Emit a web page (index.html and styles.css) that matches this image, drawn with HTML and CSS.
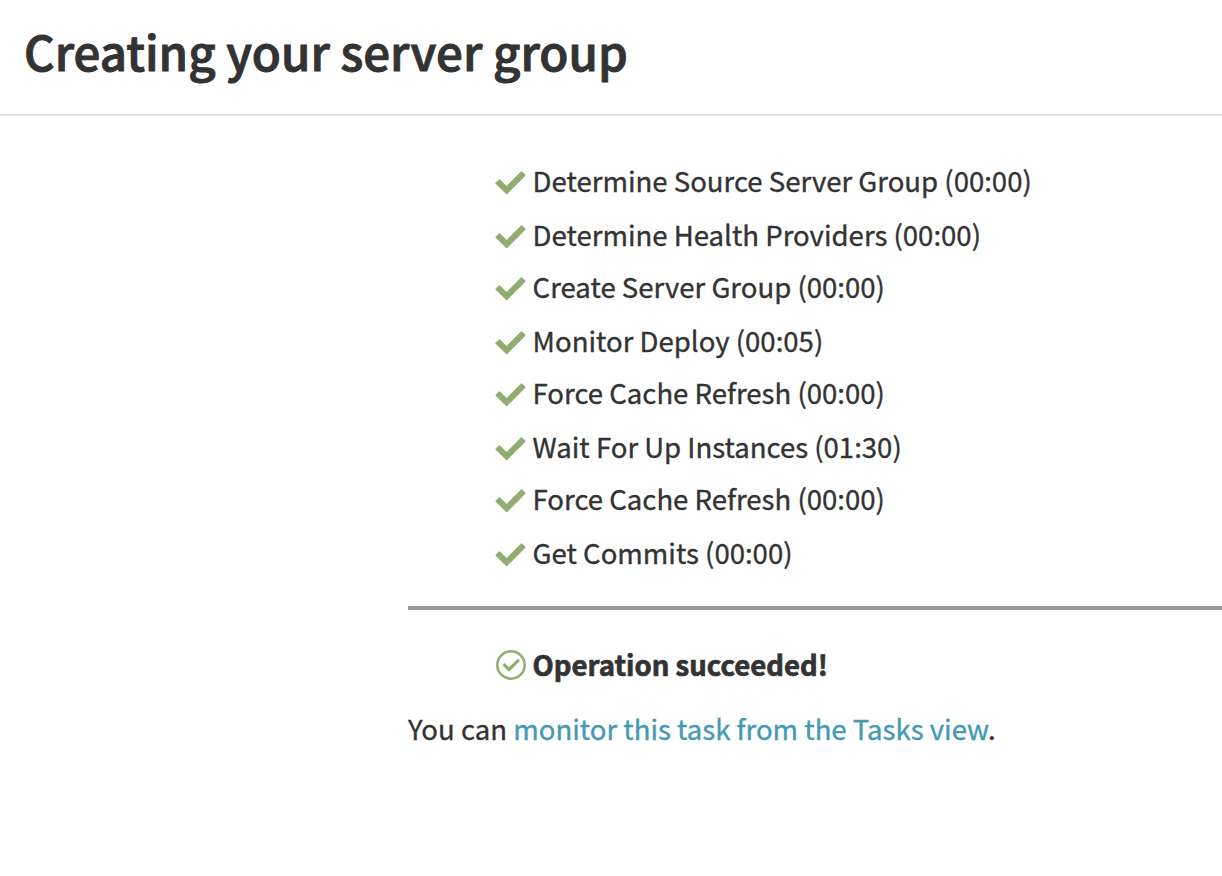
FILE: index.html
```html
<!DOCTYPE html>
<html lang="en">
<head>
<meta charset="utf-8">
<title>Creating your server group</title>
<link rel="stylesheet" href="styles.css">
</head>
<body>
<svg class="defs" aria-hidden="true">
  <symbol id="check" viewBox="0 0 31 24"><path d="M1.2 12.2 4.4 9 11.7 16 26.6 1.1 29.8 4.3 11.7 22.4Z"/></symbol>
</svg>
<header class="header"><h1 class="title">Creating your server group</h1></header>
<main class="content">
  <ul class="steps">
    <li class="step"><svg class="check"><use href="#check"/></svg><span>Determine Source Server Group (00:00)</span></li>
    <li class="step"><svg class="check"><use href="#check"/></svg><span>Determine Health Providers (00:00)</span></li>
    <li class="step"><svg class="check"><use href="#check"/></svg><span>Create Server Group (00:00)</span></li>
    <li class="step"><svg class="check"><use href="#check"/></svg><span>Monitor Deploy (00:05)</span></li>
    <li class="step"><svg class="check"><use href="#check"/></svg><span>Force Cache Refresh (00:00)</span></li>
    <li class="step"><svg class="check"><use href="#check"/></svg><span>Wait For Up Instances (01:30)</span></li>
    <li class="step"><svg class="check"><use href="#check"/></svg><span>Force Cache Refresh (00:00)</span></li>
    <li class="step"><svg class="check"><use href="#check"/></svg><span>Get Commits (00:00)</span></li>
  </ul>
  <p class="result"><svg class="circle" viewBox="0 0 30 30"><circle cx="15" cy="15" r="13.7"/><path d="M7.5 14.2 13 19.6 22.8 9.8"/></svg><span>Operation succeeded!</span></p>
  <p class="note">You can <a class="link" href="#">monitor this task from the Tasks view</a>.</p>
</main>
</body>
</html>
```
FILE: styles.css
```css
* { box-sizing: border-box; margin: 0; padding: 0; }
body {
  height: 876px;
  overflow: hidden;
  background: #fff;
  color: #333;
  font: 27.55px/40px "Noto Sans CJK SC", "Noto Sans", sans-serif;
  -webkit-text-stroke: 0.35px currentColor;
}
.defs { display: none; }
.header { height: 116px; padding: 21px 24px; border-bottom: 2px solid #e4e4e4; }
.title { font-size: 47.45px; line-height: 60px; font-weight: 500; -webkit-text-stroke-width: 1px; }
.content { padding: 39px 0 0 408px; }
.steps { list-style: none; height: 455px; padding-left: 87.4px; border-bottom: 4px solid #999; }
.step {
  display: flex;
  align-items: flex-start;
  gap: 6.2px;
  height: 54px;
  padding-top: 5px;
  white-space: nowrap;
}
.step:nth-child(even) { height: 52px; }
.check {
  width: 31px;
  height: 24px;
  margin-top: 10.5px;
  fill: #91ad70;
  stroke: #91ad70;
  stroke-width: 1.6;
  stroke-linejoin: round;
}
.result {
  display: flex;
  align-items: center;
  gap: 6.6px;
  height: 53px;
  margin-top: 28px;
  padding-left: 88px;
  font-weight: 700;
  -webkit-text-stroke-width: 0.7px;
}
.result span { padding-bottom: 1px; }
.circle { width: 30px; height: 30px; fill: none; stroke: #91ad70; stroke-width: 2.5; }
.circle path { stroke-width: 3.2; }
.note { margin-top: 17px; }
.link { color: #4499b3; text-decoration: none; }
```
